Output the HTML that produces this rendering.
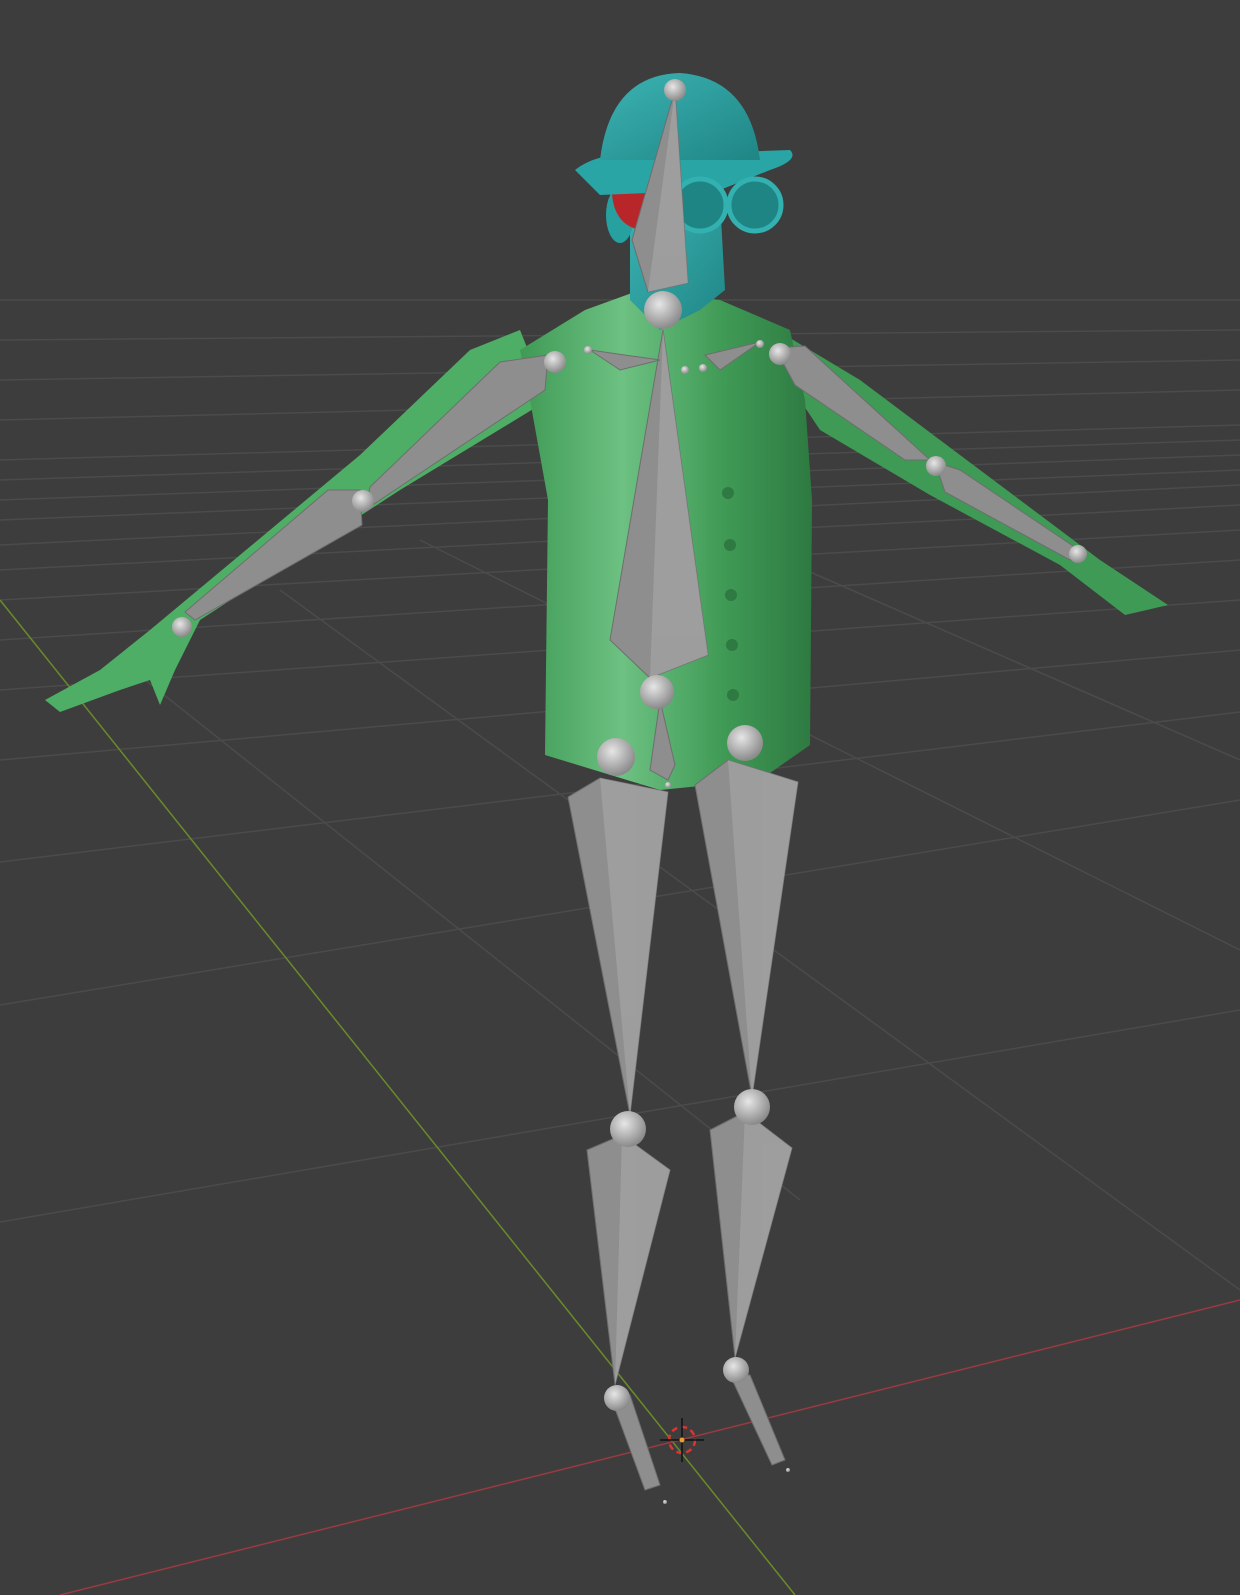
<!DOCTYPE html>
<html><head><meta charset="utf-8"><style>
html,body{margin:0;padding:0;background:#3d3d3d;width:1240px;height:1595px;overflow:hidden}
svg{display:block}
</style></head><body>
<svg width="1240" height="1595" viewBox="0 0 1240 1595" xmlns="http://www.w3.org/2000/svg">
<defs>
<radialGradient id="sp" cx="40%" cy="35%" r="65%"><stop offset="0" stop-color="#e6e6e6"/><stop offset="1" stop-color="#8a8a8a"/></radialGradient>
<linearGradient id="jk" x1="0" y1="0" x2="1" y2="0"><stop offset="0" stop-color="#3f9a55"/><stop offset="0.35" stop-color="#6dc182"/><stop offset="0.7" stop-color="#3f9a55"/><stop offset="1" stop-color="#2e7a42"/></linearGradient>
<linearGradient id="hd" x1="0" y1="0" x2="1" y2="1"><stop offset="0" stop-color="#3cb3b3"/><stop offset="1" stop-color="#1f8585"/></linearGradient>
</defs>
<rect width="1240" height="1595" fill="#3d3d3d"/>
<g stroke="#4b4b4b" stroke-width="1.5" fill="none">
<line x1="0" y1="760" x2="1240" y2="650"/>
<line x1="0" y1="862" x2="1240" y2="712"/>
<line x1="0" y1="1005" x2="1240" y2="800"/>
<line x1="0" y1="1222" x2="1240" y2="1010"/>
<line x1="0" y1="690" x2="1240" y2="600"/>
<line x1="0" y1="640" x2="1240" y2="560"/>
<line x1="0" y1="600" x2="1240" y2="530"/>
<line x1="0" y1="570" x2="1240" y2="505"/>
<line x1="0" y1="545" x2="1240" y2="485"/>
<line x1="0" y1="520" x2="1240" y2="470"/>
<line x1="0" y1="500" x2="1240" y2="455"/>
<line x1="0" y1="480" x2="1240" y2="440"/>
<line x1="0" y1="460" x2="1240" y2="425"/>
<line x1="280" y1="590" x2="1240" y2="1290"/>
<line x1="420" y1="540" x2="1240" y2="950"/>
<line x1="600" y1="480" x2="1240" y2="760"/>
<line x1="120" y1="660" x2="800" y2="1200"/>
<line x1="0" y1="420" x2="1240" y2="390"/>
<line x1="0" y1="380" x2="1240" y2="360"/>
<line x1="0" y1="340" x2="1240" y2="330"/>
<line x1="0" y1="300" x2="1240" y2="300"/>
</g>
<line x1="0" y1="600" x2="795" y2="1595" stroke="#6b8a2a" stroke-width="1.5"/>
<line x1="60" y1="1595" x2="1240" y2="1300" stroke="#9a3a42" stroke-width="1.5"/>
<!-- body -->
<polygon points="520,330 548,400 400,490 200,620 175,670 160,705 150,680 120,690 60,712 45,700 100,670 150,630 360,455 470,350" fill="#4fae65"/>
<polygon points="760,320 860,380 940,440 1100,560 1168,605 1125,615 1060,565 930,495 820,430 800,400" fill="#3f9a55"/>
<polygon points="585,310 640,290 720,300 790,330 805,400 812,500 810,745 760,780 660,790 545,755 548,500 530,400 520,350" fill="url(#jk)"/>
<g fill="#2e7a42"><circle cx="728" cy="493" r="6"/><circle cx="730" cy="545" r="6"/><circle cx="731" cy="595" r="6"/><circle cx="732" cy="645" r="6"/><circle cx="733" cy="695" r="6"/></g>
<!-- head -->
<polygon points="630,210 720,200 725,290 700,310 660,330 630,300" fill="url(#hd)"/>
<ellipse cx="620" cy="215" rx="14" ry="28" fill="#27a0a0"/>
<path d="M610,160 Q640,155 650,200 L640,230 Q615,225 612,195 Z" fill="#b8262a"/>
<path d="M575,170 Q600,150 650,155 L790,150 Q800,160 770,170 L720,190 L600,195 Z" fill="#2aa5a5"/>
<path d="M600,160 Q610,75 680,73 Q750,78 760,160 Z" fill="url(#hd)"/>
<circle cx="700" cy="205" r="26" fill="#1e8484" stroke="#33b0b0" stroke-width="5"/>
<circle cx="755" cy="205" r="26" fill="#1e8484" stroke="#33b0b0" stroke-width="5"/>
<!-- bones -->
<g fill="#8e8e8e" stroke="#6e6e6e" stroke-width="1">
<polygon points="675,90 632,240 648,292 688,283"/>
<polygon points="663,330 610,640 650,678 708,655"/>
<polygon points="660,700 650,770 668,780 675,765"/>
<polygon points="548,355 500,362 370,487 365,510 545,390"/>
<polygon points="360,490 328,490 185,612 195,620 362,525"/>
<polygon points="775,348 805,346 930,460 905,460 795,385"/>
<polygon points="935,462 960,470 1082,552 1070,560 945,492"/>
<polygon points="590,350 660,360 620,370"/>
<polygon points="705,355 760,342 720,370"/>
<polygon points="568,797 600,778 668,792 630,1115"/>
<polygon points="695,785 728,760 798,782 752,1097"/>
<polygon points="587,1150 622,1135 670,1170 615,1385"/>
<polygon points="710,1130 745,1112 792,1148 735,1358"/>
<polygon points="610,1395 630,1395 660,1485 645,1490"/>
<polygon points="730,1375 750,1375 785,1460 772,1465"/>
</g>
<g fill="#a8a8a8" opacity="0.6">
<polygon points="675,90 688,283 648,292"/>
<polygon points="663,330 708,655 650,678"/>
<polygon points="600,778 668,792 630,1115"/>
<polygon points="728,760 798,782 752,1097"/>
<polygon points="622,1135 670,1170 615,1385"/>
<polygon points="745,1112 792,1148 735,1358"/>
</g>
<g fill="url(#sp)">
<circle cx="675" cy="90" r="11"/>
<circle cx="663" cy="310" r="19"/>
<circle cx="555" cy="362" r="11"/>
<circle cx="780" cy="354" r="11"/>
<circle cx="588" cy="350" r="4"/><circle cx="760" cy="344" r="4"/>
<circle cx="685" cy="370" r="4"/><circle cx="703" cy="368" r="4"/>
<circle cx="363" cy="501" r="11"/>
<circle cx="182" cy="627" r="10"/>
<circle cx="936" cy="466" r="10"/>
<circle cx="1078" cy="554" r="9"/>
<circle cx="657" cy="692" r="17"/>
<circle cx="616" cy="757" r="19"/>
<circle cx="745" cy="743" r="18"/>
<circle cx="628" cy="1129" r="18"/>
<circle cx="752" cy="1107" r="18"/>
<circle cx="617" cy="1398" r="13"/>
<circle cx="736" cy="1370" r="13"/>
<circle cx="668" cy="785" r="3"/><circle cx="665" cy="1502" r="2"/><circle cx="788" cy="1470" r="2"/>
</g>
<!-- 3d cursor -->
<circle cx="682" cy="1440" r="13" fill="none" stroke="#d33" stroke-width="2.5" stroke-dasharray="6 4"/>
<line x1="682" y1="1418" x2="682" y2="1462" stroke="#111" stroke-width="1.5"/>
<line x1="660" y1="1440" x2="704" y2="1440" stroke="#111" stroke-width="1.5"/>
<circle cx="682" cy="1440" r="2.5" fill="#e8a030"/>
</svg>
</body></html>
